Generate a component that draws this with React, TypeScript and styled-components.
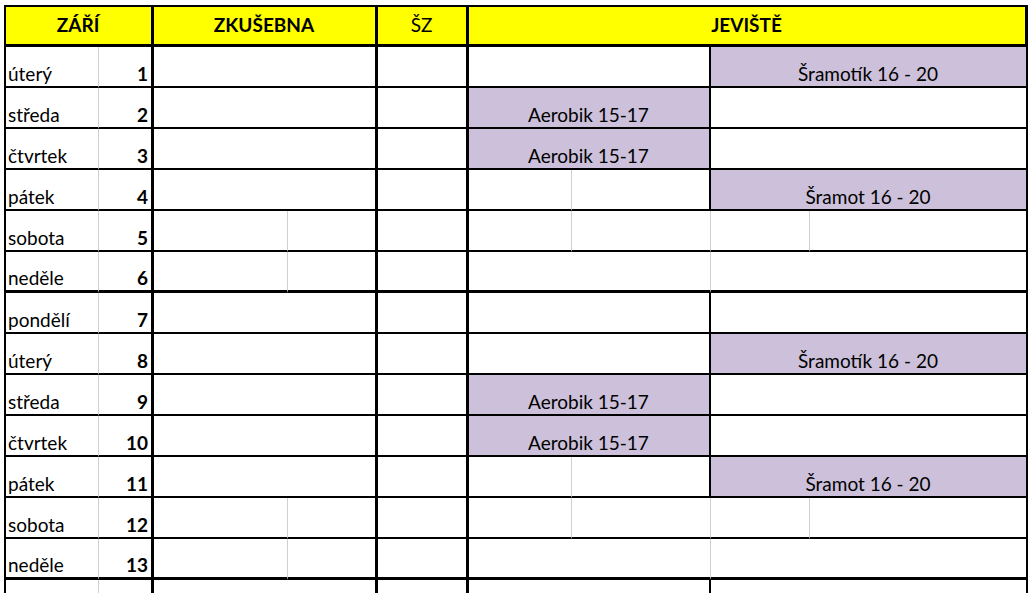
import React from "react";
import styled, { createGlobalStyle, css } from "styled-components";

const GlobalStyle = createGlobalStyle`
	html, body {
		margin: 0;
		padding: 0;
		background: #ffffff;
		overflow: hidden;
	}
	body {
		font-family: Lato, "Noto Sans", sans-serif;
		color: #000000;
	}
`;

type Line = "none" | "light" | "thin" | "thick" | "edge";

const lines: Record<Line, string> = {
	none: "0",
	light: "1px solid #d0d0d0",
	thin: "2px solid #000000",
	thick: "3px solid #000000",
	edge: "2px solid #000000",
};

const Sheet = styled.div`
	margin: 5px 0 0 4px;
	width: 1022px;
	border-top: 2px solid #000;
	border-left: 2px solid #000;
	display: grid;
	grid-template-columns: 93px 55px 134px 90px 91px 103px 139px 99px 218px;
	grid-template-rows: 40px;
	grid-auto-rows: 41px;
	font-size: 19px;
`;

const Cell = styled.div<{
	$span?: number;
	$right: Line;
	$bottom: Line;
	$fill?: "yellow" | "purple";
	$align?: "left" | "center" | "right";
	$bold?: boolean;
	$header?: boolean;
}>`
	box-sizing: border-box;
	grid-column: span ${(p) => p.$span ?? 1};
	border-right: ${(p) => lines[p.$right]};
	border-bottom: ${(p) => lines[p.$bottom]};
	display: flex;
	align-items: ${(p) => (p.$header ? "center" : "flex-end")};
	justify-content: ${(p) =>
		p.$align === "center" ? "center" : p.$align === "right" ? "flex-end" : "flex-start"};
	padding: 0 3px 1px 2px;
	font-weight: ${(p) => (p.$bold ? 700 : 400)};
	line-height: 22px;
	white-space: nowrap;
	overflow: hidden;
	${(p) =>
		p.$fill === "yellow" &&
		css`
			background: #ffff00;
		`}
	${(p) =>
		p.$fill === "purple" &&
		css`
			background: #ccc0da;
		`}
`;

type Kind = "tue" | "mid" | "fri" | "sat" | "sun" | "mon";

interface Day {
	name: string;
	num: number | null;
	kind: Kind;
	weekEnd?: boolean;
}

// the last row only shows its top edge in the picture, so it stays empty
const days: Day[] = [
	{ name: "úterý", num: 1, kind: "tue" },
	{ name: "středa", num: 2, kind: "mid" },
	{ name: "čtvrtek", num: 3, kind: "mid" },
	{ name: "pátek", num: 4, kind: "fri" },
	{ name: "sobota", num: 5, kind: "sat" },
	{ name: "neděle", num: 6, kind: "sun", weekEnd: true },
	{ name: "pondělí", num: 7, kind: "mon" },
	{ name: "úterý", num: 8, kind: "tue" },
	{ name: "středa", num: 9, kind: "mid" },
	{ name: "čtvrtek", num: 10, kind: "mid" },
	{ name: "pátek", num: 11, kind: "fri" },
	{ name: "sobota", num: 12, kind: "sat" },
	{ name: "neděle", num: 13, kind: "sun", weekEnd: true },
	{ name: "", num: null, kind: "mon" },
];

function Stage({ kind, bottom }: { kind: Kind; bottom: Line }) {
	switch (kind) {
		case "tue":
			return (
				<>
					<Cell $span={2} $right="thin" $bottom={bottom} />
					<Cell $span={2} $right="edge" $bottom={bottom} $fill="purple" $align="center">
						Šramotík 16 - 20
					</Cell>
				</>
			);
		case "mid":
			return (
				<>
					<Cell $span={2} $right="thin" $bottom={bottom} $fill="purple" $align="center">
						Aerobik 15-17
					</Cell>
					<Cell $span={2} $right="edge" $bottom={bottom} />
				</>
			);
		case "fri":
			return (
				<>
					<Cell $right="light" $bottom={bottom} />
					<Cell $right="thin" $bottom={bottom} />
					<Cell $span={2} $right="edge" $bottom={bottom} $fill="purple" $align="center">
						Šramot 16 - 20
					</Cell>
				</>
			);
		case "sat":
			return (
				<>
					<Cell $right="light" $bottom={bottom} />
					<Cell $right="light" $bottom={bottom} />
					<Cell $right="light" $bottom={bottom} />
					<Cell $right="edge" $bottom={bottom} />
				</>
			);
		case "sun":
			return (
				<>
					<Cell $span={2} $right="light" $bottom={bottom} />
					<Cell $span={2} $right="edge" $bottom={bottom} />
				</>
			);
		default:
			return (
				<>
					<Cell $span={2} $right="thin" $bottom={bottom} />
					<Cell $span={2} $right="edge" $bottom={bottom} />
				</>
			);
	}
}

function Rehearsal({ kind, bottom }: { kind: Kind; bottom: Line }) {
	if (kind === "sat" || kind === "sun") {
		return (
			<>
				<Cell $right="light" $bottom={bottom} />
				<Cell $right="thick" $bottom={bottom} />
			</>
		);
	}
	return <Cell $span={2} $right="thick" $bottom={bottom} />;
}

export default function App() {
	return (
		<>
			<GlobalStyle />
			<Sheet>
				<Cell $span={2} $right="thick" $bottom="thick" $fill="yellow" $align="center" $bold $header>
					ZÁŘÍ
				</Cell>
				<Cell $span={2} $right="thick" $bottom="thick" $fill="yellow" $align="center" $bold $header>
					ZKUŠEBNA
				</Cell>
				<Cell $right="thick" $bottom="thick" $fill="yellow" $align="center" $header>
					ŠZ
				</Cell>
				<Cell $span={4} $right="thick" $bottom="thick" $fill="yellow" $align="center" $bold $header>
					JEVIŠTĚ
				</Cell>

				{days.map((d, i) => {
					const bottom: Line = d.weekEnd ? "thick" : "thin";
					return (
						<React.Fragment key={i}>
							<Cell $right="light" $bottom={bottom}>
								{d.name}
							</Cell>
							<Cell $right="thick" $bottom={bottom} $align="right" $bold>
								{d.num}
							</Cell>
							<Rehearsal kind={d.kind} bottom={bottom} />
							<Cell $right="thick" $bottom={bottom} />
							<Stage kind={d.kind} bottom={bottom} />
						</React.Fragment>
					);
				})}
			</Sheet>
		</>
	);
}
